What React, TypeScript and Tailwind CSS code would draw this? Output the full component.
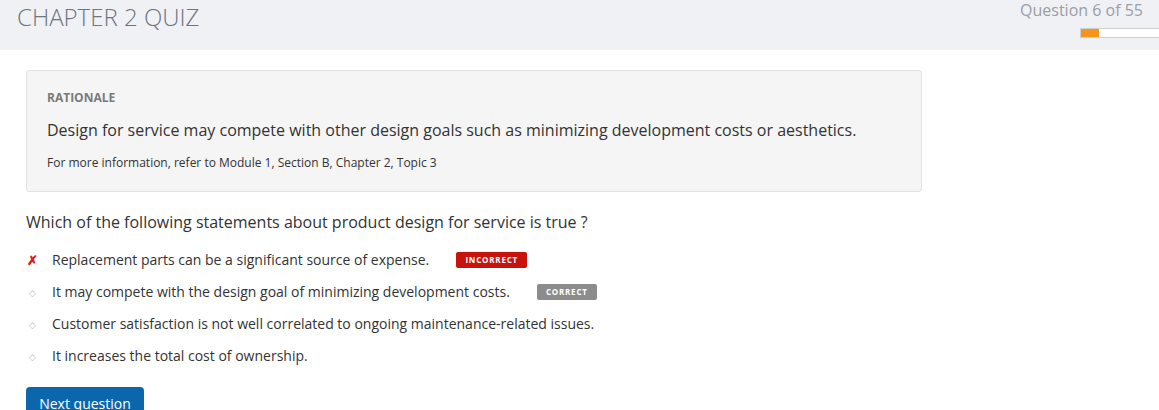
import React from "react";

const options = [
  { text: "Replacement parts can be a significant source of expense.", status: "incorrect" },
  { text: "It may compete with the design goal of minimizing development costs.", status: "correct" },
  { text: "Customer satisfaction is not well correlated to ongoing maintenance-related issues.", status: "" },
  { text: "It increases the total cost of ownership.", status: "" },
];

export default function App() {
  return (
    <div className="w-[1159px] h-[410px] overflow-hidden bg-white" style={{ fontFamily: '"Open Sans", sans-serif' }}>
      <header className="h-[50px] bg-[#eff1f5] flex justify-between">
        <h1 className="pl-[17px] pt-[1px] text-[24px] leading-[32px] font-light text-[#6d7580]">CHAPTER 2 QUIZ</h1>
        <div className="flex flex-col items-end">
          <div className="pr-[16px] text-[16px] leading-[20px] text-[#9a9ea5]">Question 6 of 55</div>
          <div className="mt-[8px] w-[79px] h-[10px] border border-[#cfcfcf] border-r-0 bg-white flex">
            <div className="w-[18px] h-full bg-[#f7941d]"></div>
          </div>
        </div>
      </header>
      <main className="px-[26px] pt-[20px]">
        <div className="w-[896px] h-[122px] bg-[#f5f5f5] border border-[#e2e2e2] rounded-[3px] pl-[20px] pt-[18px]">
          <div className="text-[12px] leading-[18px] font-bold text-[#7a7a7a]">RATIONALE</div>
          <div className="mt-[12px] text-[16px] leading-[22px] text-[#333]">
            Design for service may compete with other design goals such as minimizing development costs or aesthetics.
          </div>
          <div className="mt-[13px] text-[12px] leading-[18px] text-[#333]">
            For more information, refer to Module 1, Section B, Chapter 2, Topic 3
          </div>
        </div>
        <div className="mt-[18px] text-[16px] leading-[24px] text-[#333]">
          Which of the following statements about product design for service is true ?
        </div>
        <ul className="mt-[15px] flex flex-col gap-[10px]">
          {options.map((o, i) => (
            <li key={i} className="flex items-center h-[22px]">
              <span className="w-[26px] flex justify-start pl-[1px]">
                {o.status === "incorrect" ? (
                  <span className="text-[#e0141b] text-[13px] font-bold leading-none">✗</span>
                ) : (
                  <span className="text-[#b8b8b8] text-[9px] leading-none pl-[2px]">◇</span>
                )}
              </span>
              <span className="text-[14px] leading-[20px] text-[#333]">{o.text}</span>
              {o.status === "incorrect" && (
                <span className="ml-[27px] w-[71px] h-[16px] bg-[#c8120c] rounded-[2px] text-white text-[8px] font-bold tracking-[0.8px] flex items-center justify-center">INCORRECT</span>
              )}
              {o.status === "correct" && (
                <span className="ml-[27px] w-[60px] h-[16px] bg-[#8c8c8c] rounded-[2px] text-white text-[8px] font-bold tracking-[0.8px] flex items-center justify-center">CORRECT</span>
              )}
            </li>
          ))}
        </ul>
        <button className="mt-[20px] w-[118px] h-[32px] bg-[#0b66ab] rounded-[4px] text-white text-[14px] leading-[20px] pt-[7px] flex justify-center items-start">
          Next question
        </button>
      </main>
    </div>
  );
}
